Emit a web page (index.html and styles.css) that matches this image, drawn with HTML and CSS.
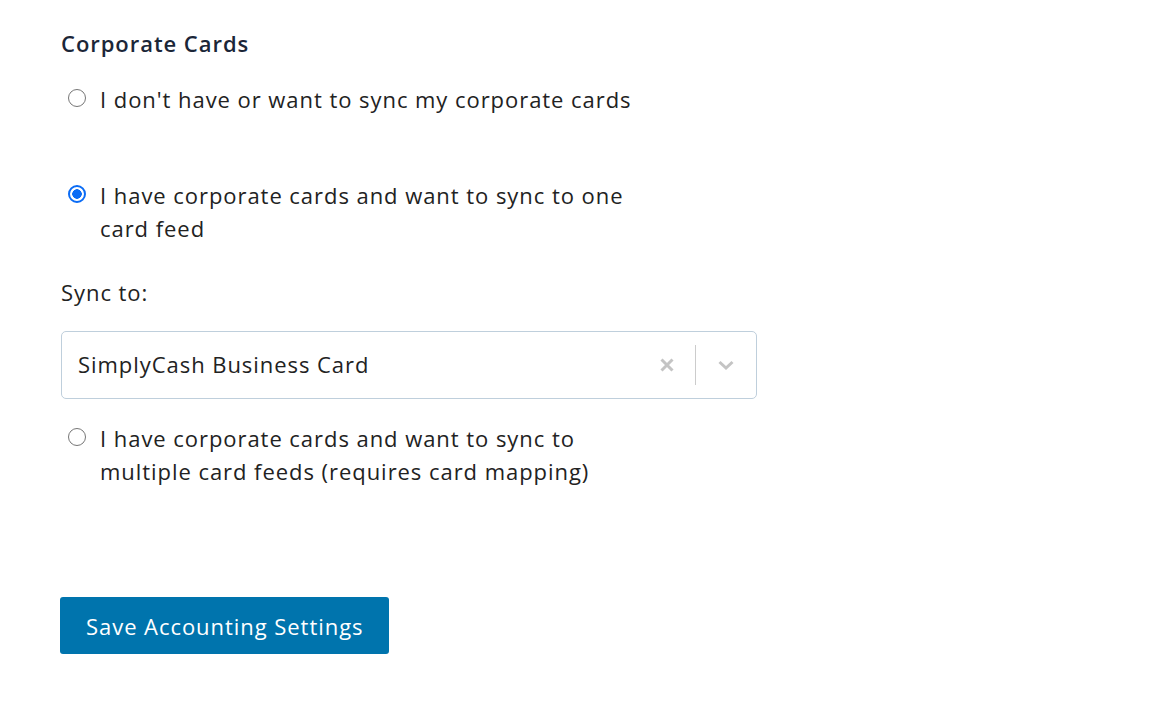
FILE: index.html
```html
<!DOCTYPE html>
<html lang="en">
<head>
    <meta charset="UTF-8">
    <meta name="viewport" content="width=device-width, initial-scale=1.0">
    <title>Accounting Settings</title>
    <link rel="stylesheet" href="styles.css">
</head>
<body>

<div class="settings">
    <h2 class="section-title">Corporate Cards</h2>

    <!-- Choix de synchronisation des cartes -->
    <label class="option option-first">
        <input type="radio" name="cards" value="none">
        <span>I don't have or want to sync my corporate cards</span>
    </label>

    <label class="option option-second">
        <input type="radio" name="cards" value="one" checked>
        <span>I have corporate cards and want to sync to one card feed</span>
    </label>

    <div class="sync-to">
        <div class="field-label">Sync to:</div>
        <div class="select-box">
            <span class="select-value">SimplyCash Business Card</span>
            <span class="select-clear">
                <svg width="18" height="18" viewBox="0 0 18 18"><path d="M3.5 3.5 L14.5 14.5 M14.5 3.5 L3.5 14.5" stroke="#c4c4c4" stroke-width="3" stroke-linecap="butt"/></svg>
            </span>
            <span class="select-sep"></span>
            <span class="select-arrow">
                <svg width="20" height="20" viewBox="0 0 20 20"><path d="M3.5 7 L10 13 L16.5 7" fill="none" stroke="#c4c4c4" stroke-width="3"/></svg>
            </span>
        </div>
    </div>

    <label class="option option-third">
        <input type="radio" name="cards" value="multiple">
        <span>I have corporate cards and want to sync to multiple card feeds (requires card mapping)</span>
    </label>

    <button class="save-button">Save Accounting Settings</button>
</div>

</body>
</html>
```

FILE: styles.css
```css
body {
    margin: 0;
    font-family: "Open Sans", Arial, sans-serif;
    letter-spacing: 0.95px;
    background-color: #ffffff;
    color: #222222;
}
.settings {
    padding: 28px 60px 40px 61px;
}
.section-title {
    margin: 0;
    font-size: 22px;
    font-weight: 600;
    line-height: 30px;
    color: #1b2638;
}
.option {
    display: flex;
    align-items: flex-start;
    gap: 14px;
    font-size: 22px;
    line-height: 33px;
    padding-left: 7px;
    cursor: pointer;
}
.option-first {
    margin-top: 25px;
}
.option-second {
    margin-top: 63px;
    width: 580px;
}
.option-third {
    margin-top: 23px;
    width: 560px;
}
.option input {
    appearance: none;
    -webkit-appearance: none;
    flex: none;
    width: 18px;
    height: 18px;
    margin: 6px 0 0 0;
    border: 1px solid #767676;
    border-radius: 50%;
    background: #fff;
}
.option input:checked {
    border: 2px solid #0b6cf5;
    background: radial-gradient(circle, #0b6cf5 0 4.5px, #fff 5px);
}
.sync-to {
    margin-top: 31px;
}
.field-label {
    font-size: 22px;
    line-height: 33px;
}
.select-box {
    display: flex;
    align-items: center;
    width: 694px;
    height: 66px;
    margin-top: 22px;
    border: 1px solid #bfcfdc;
    border-radius: 5px;
    box-sizing: content-box;
}
.select-value {
    flex: 1;
    padding-left: 16px;
    font-size: 22px;
    margin-top: -2px;
}
.select-clear {
    display: flex;
    padding: 0 19px 0 0;
}
.select-sep {
    width: 1px;
    height: 40px;
    background: #cccccc;
}
.select-arrow {
    display: flex;
    padding: 0 20px 0 20px;
}
.save-button {
    display: block;
    margin-top: 109px;
    margin-left: -1px;
    padding: 0 26px;
    height: 57px;
    font-family: "Open Sans", Arial, sans-serif;
    font-size: 22px;
    letter-spacing: 0.95px;
    color: #ffffff;
    background-color: #0074ad;
    border: none;
    border-radius: 3px;
}
```
